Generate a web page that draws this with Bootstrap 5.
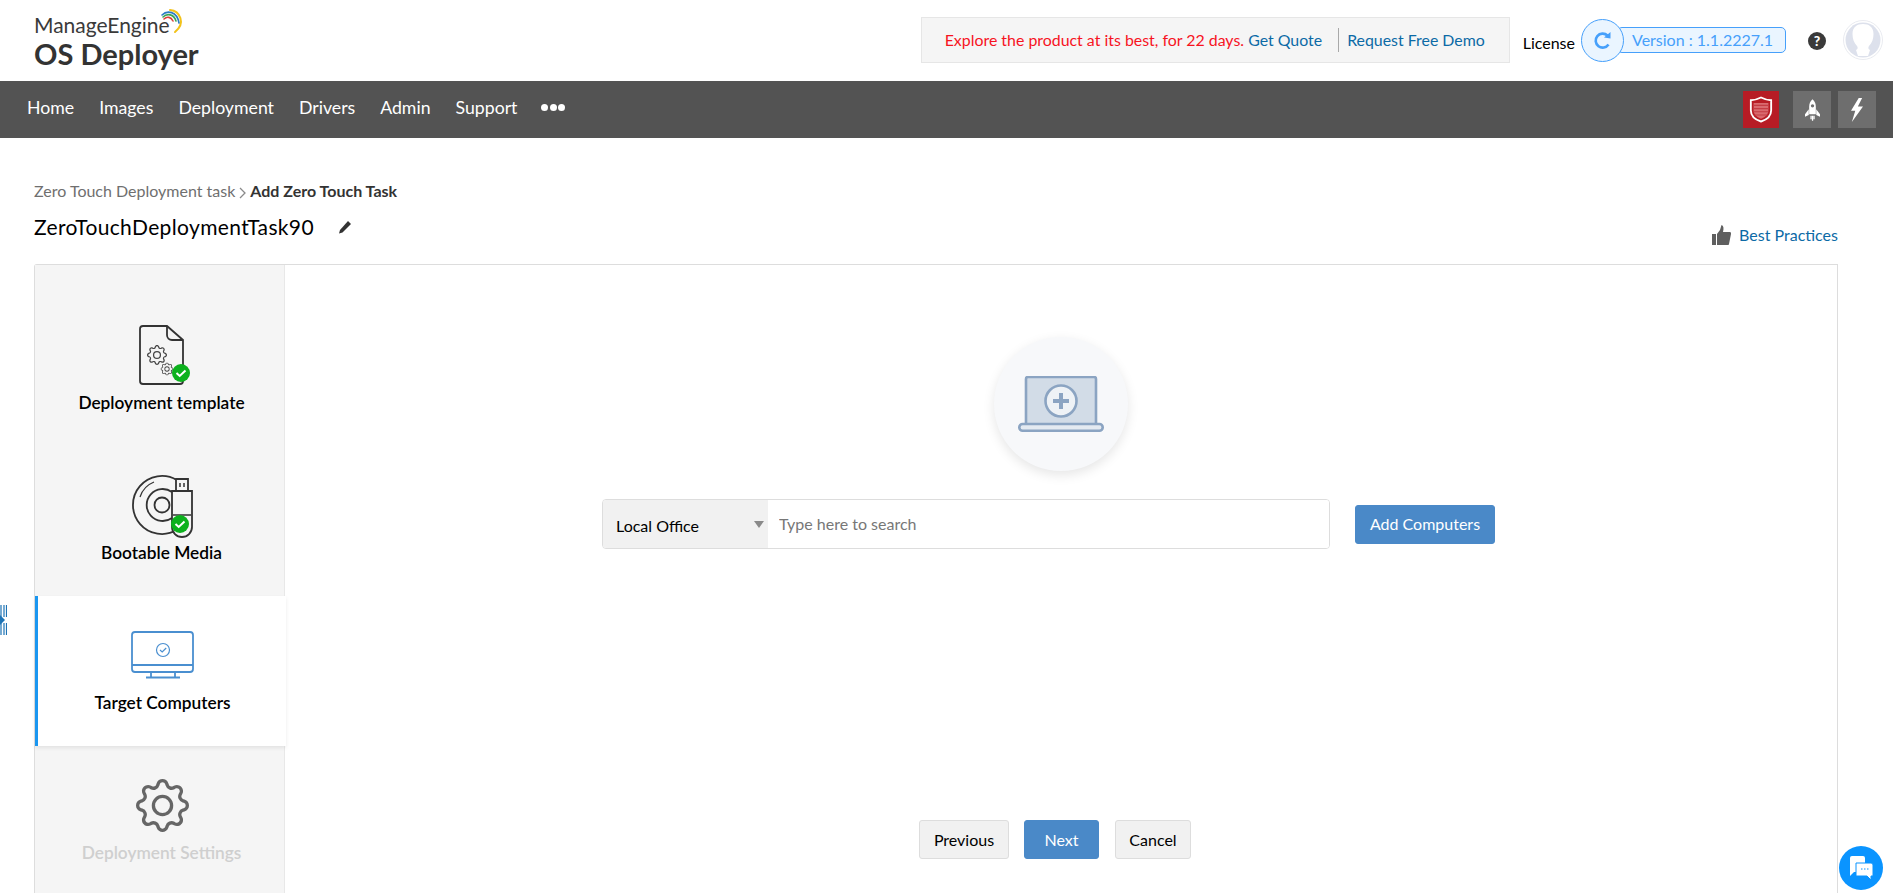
<!DOCTYPE html>
<html lang="en">
<head>
<meta charset="utf-8">
<title>OS Deployer</title>
<link href="https://cdn.jsdelivr.net/npm/bootstrap@5.3.0/dist/css/bootstrap.min.css" rel="stylesheet">
<style>
html,body{height:893px;overflow:hidden}
body{font-family:Lato,"Liberation Sans",sans-serif;color:#000;background:#fff;font-size:16px}
a{text-decoration:none}
.top-head{height:81px;padding-left:34px;padding-right:10px}
.brand-box{position:relative;width:180px;color:#333}
.brand-a{font-size:21px;line-height:26px;margin-top:12px;color:#3a3a3a}
.brand-b{font-size:29px;line-height:31px;font-weight:700;color:#333;margin-top:0}
.brand-arc{position:absolute;left:121px;top:8px}
.promo{width:589px;height:46px;background:#f5f5f5;border:1px solid #e6e6e6;margin-top:17px;padding-left:23px;font-size:15.9px}
.promo-red{color:#f7131f}
.promo a,.best-link{color:#0c6aa6}
.promo-sep{width:1px;height:24px;background:#a9a9a9;margin:0 8px 0 16px}
.lic{font-size:16px;margin-left:13px;margin-right:6px;margin-top:7px;color:#000}
.ver-wrap{position:relative;width:205px;height:43px;margin-top:19px}
.ver-pill{position:absolute;left:36px;right:0;top:8px;height:26px;background:#eaf5ff;border:1px solid #46a0fb;border-radius:5px;color:#46a0fb;font-size:16px;line-height:24px;padding-left:14px}
.ver-round{position:absolute;left:0;top:0;width:43px;height:43px;border-radius:50%;background:#eaf5ff;border:1px solid #46a0fb}
.help-dot{width:18px;height:18px;border-radius:50%;background:#3a3a3a;color:#fff;font-size:14px;line-height:18px;font-weight:900;text-align:center;margin:32px 17px 0 22px}
.avatar-box{margin-top:20px}
.nav-strip{height:57px;background:#535353;padding:0 17px 0 27px}
.nav-strip .nav-link{color:#fff;font-size:17.7px;padding:0 0 2px;margin-right:25px}
.dots-row{gap:1.500px;margin-top:-4px;margin-left:-1px}
.dots-row i{display:block;width:7px;height:7px;border-radius:50%;background:#fff}
.tool-tile{width:38px;height:37px;background:#6e6e6e;margin-left:7px}
.tool-red{width:36px;background:#b71c25;margin-right:7px}
.page-body{padding:0 55px 0 34px}
.crumbs{font-size:16px;line-height:20px;padding-top:43px;color:#6f6f6f;height:63px}
.crumbs b{color:#333;font-weight:700}
.title-row{height:63px;padding-top:12px}
.task-name{font-size:21px;line-height:28px;letter-spacing:.36px}
.best-link{font-size:16px;margin-top:10px}
.panel-box{height:640px;border:1px solid #ddd;border-bottom:0;border-radius:3px 0 0 0;background:#fff}
.side-col{width:250px;flex:none;padding-top:31px;background:#f5f5f5;border-right:1px solid #e8e8e8}
.step-item{height:150px;padding:29px 0 0 4px;text-align:center;font-size:17.3px;line-height:24px;font-weight:600}
.step-item svg{display:block;margin:0 auto 2px}
.step-on{background:#fff;border-left:3px solid #1a96f0;padding-left:1px;box-shadow:0 2px 4px rgba(0,0,0,.08);width:251px}
.step-off{color:#cfcfcf}
.main-col{height:627px;padding-top:72px}
.add-disc{width:134px;height:134px;border-radius:50%;background:#f7f8fa;box-shadow:0 4px 12px rgba(0,0,0,.1);margin-left:709px}
.search-line{margin:28px 0 0 317px;gap:25px}
.search-group{width:728px;height:50px;border:1px solid #ddd;border-radius:4px}
.scope-btn{width:166px;height:48px;background:#f1f1f1;border:0;border-right:1px solid #ddd;border-radius:3px 0 0 3px;text-align:left;padding-left:13px;font-size:16px;padding-top:5px;position:relative;color:#000}
.scope-btn::after{position:absolute;right:4px;top:21px;border-top:7px solid #8a8a8a;border-left:5px solid transparent;border-right:5px solid transparent;border-bottom:0;margin:0}
.search-field{border:0;font-size:16px;padding-left:11px;border-radius:0 3px 3px 0}
.search-field::placeholder{color:#777}
.blue-btn{background:#4a89c8;border:1px solid #4a89c8;color:#fff;font-size:16px;height:39px;padding:0;border-radius:3px}
.blue-btn:hover{background:#4a89c8;color:#fff}
.add-btn{width:140px}
.foot-row{margin-top:auto;margin-bottom:33px;padding-left:634px;gap:15px}
.ghost-btn{background:#f1f1f1;border:1px solid #ddd;color:#000;font-size:16px;height:39px;padding:0;border-radius:3px}
.w-prev{width:90px}.w-next{width:75px}.w-cancel{width:76px;margin-left:1px}
.edge-mark{position:fixed;left:0;top:605px}
.chat-bubble{position:fixed;left:1839px;top:846px;width:44px;height:44px;border-radius:50%;background:#0a94ff}
</style>
</head>
<body>
<svg width="0" height="0" class="d-block position-absolute">
<defs>
<symbol id="gear-shape" viewBox="0 0 16 16">
<path d="M8 4.754a3.246 3.246 0 1 0 0 6.492 3.246 3.246 0 0 0 0-6.492zM5.754 8a2.246 2.246 0 1 1 4.492 0 2.246 2.246 0 0 1-4.492 0z"/>
<path d="M9.796 1.343c-.527-1.79-3.065-1.79-3.592 0l-.094.319a.873.873 0 0 1-1.255.52l-.292-.16c-1.64-.892-3.433.902-2.54 2.541l.159.292a.873.873 0 0 1-.52 1.255l-.319.094c-1.79.527-1.79 3.065 0 3.592l.319.094a.873.873 0 0 1 .52 1.255l-.16.292c-.892 1.64.901 3.434 2.541 2.54l.292-.159a.873.873 0 0 1 1.255.52l.094.319c.527 1.79 3.065 1.79 3.592 0l.094-.319a.873.873 0 0 1 1.255-.52l.292.16c1.64.893 3.434-.902 2.54-2.541l-.159-.292a.873.873 0 0 1 .52-1.255l.319-.094c1.79-.527 1.79-3.065 0-3.592l-.319-.094a.873.873 0 0 1-.52-1.255l.16-.292c.893-1.64-.902-3.433-2.541-2.54l-.292.159a.873.873 0 0 1-1.255-.52l-.094-.319zm-2.633.283c.246-.835 1.428-.835 1.674 0l.094.319a1.873 1.873 0 0 0 2.693 1.115l.291-.16c.764-.415 1.6.42 1.184 1.185l-.159.292a1.873 1.873 0 0 0 1.116 2.692l.318.094c.835.246.835 1.428 0 1.674l-.319.094a1.873 1.873 0 0 0-1.115 2.693l.16.291c.415.764-.42 1.6-1.185 1.184l-.291-.159a1.873 1.873 0 0 0-2.693 1.116l-.094.318c-.246.835-1.428.835-1.674 0l-.094-.319a1.873 1.873 0 0 0-2.692-1.115l-.292.16c-.764.415-1.6-.42-1.184-1.185l.159-.291A1.873 1.873 0 0 0 1.945 8.93l-.319-.094c-.835-.246-.835-1.428 0-1.674l.319-.094A1.873 1.873 0 0 0 3.06 4.377l-.16-.292c-.415-.764.42-1.6 1.185-1.184l.292.159a1.873 1.873 0 0 0 2.692-1.115l.094-.319z"/>
</symbol>
</defs>
</svg>

<header class="top-head d-flex align-items-start">
  <div class="brand-box">
    <div class="brand-a">ManageEngine</div>
    <div class="brand-b">OS Deployer</div>
    <svg class="brand-arc" width="32" height="28" viewBox="0 0 32 28" fill="none" stroke-width="1.6" stroke-linecap="round">
      <path d="M15 2C25 3 31 15 20 24" stroke="#f2c21a" stroke-width="2"/>
      <path d="M7 7C12 2 22 3 24 15" stroke="#2a7bc4"/>
      <path d="M8 9C12 5 19 6 21 13" stroke="#3aa655"/>
      <path d="M9 11C12 8 16 9 18 13" stroke="#d9413c"/>
    </svg>
  </div>
  <div class="ms-auto d-flex align-items-start">
    <div class="promo d-flex align-items-center">
      <span class="promo-red">Explore the product at its best, for 22 days.</span>&nbsp;<a href="#">Get Quote</a>
      <span class="promo-sep"></span>
      <a href="#">Request Free Demo</a>
    </div>
    <div class="lic pt-4">License</div>
    <div class="ver-wrap">
      <div class="ver-pill">Version : 1.1.2227.1</div>
      <div class="ver-round d-flex align-items-center justify-content-center">
        <svg width="20" height="20" viewBox="0 0 20 20" fill="none"><path d="M15.500 13.500A7 7 0 1 1 14.500 4.500" stroke="#46a0fb" stroke-width="2.600"/><path d="M11 6.500L17.500 7.500V1Z" fill="#46a0fb"/></svg>
      </div>
    </div>
    <div class="help-dot">?</div>
    <svg class="avatar-box" width="40" height="40" viewBox="0 0 40 40"><circle cx="20" cy="20" r="19.500" fill="#fff" stroke="#e9ebf0"/><circle cx="20" cy="20" r="17.500" fill="#dde1ec"/><path d="M9.500 14c0-7 4.500-10 10.500-10s10.500 3 10.500 10c0 5-1.500 9-4.500 12-1 1.500-1 3 1 4l-2 6H15l-2-6c2-1 2-2.500 1-4-3-3-4.500-7-4.500-12z" fill="#fff"/></svg>
  </div>
</header>

<nav class="nav-strip d-flex align-items-center">
  <ul class="nav align-items-center">
    <li class="nav-item"><a class="nav-link" href="#">Home</a></li>
    <li class="nav-item"><a class="nav-link" href="#">Images</a></li>
    <li class="nav-item"><a class="nav-link" href="#">Deployment</a></li>
    <li class="nav-item"><a class="nav-link" href="#">Drivers</a></li>
    <li class="nav-item"><a class="nav-link" href="#">Admin</a></li>
    <li class="nav-item"><a class="nav-link" href="#">Support</a></li>
    <li class="nav-item d-flex dots-row"><i></i><i></i><i></i></li>
  </ul>
  <div class="ms-auto d-flex">
    <div class="tool-tile tool-red d-flex align-items-center justify-content-center">
      <svg width="24" height="29" viewBox="0 0 26 30"><path d="M13 2C9 4 6 5 2 5v11c0 6 5 10 11 12 6-2 11-6 11-12V5c-4 0-7-1-11-3z" fill="none" stroke="#fff" stroke-width="2"/><path d="M5 8h16v8c0 4-3 7-8 9-5-2-8-5-8-9z" fill="#d96a6f"/><path d="M5 10.500h16M5 14h16M5 17.500h16M6 21h14" stroke="#c43c44" stroke-width="1.200"/></svg>
    </div>
    <div class="tool-tile d-flex align-items-center justify-content-center">
      <svg width="15" height="26" viewBox="0 0 18 28" fill="#fff"><path d="M9 1c3 2.500 4 6 4 9v9H5v-9c0-3 1-6.500 4-9z"/><path d="M4.500 13L0 19v3l4.500-2zM13.500 13L18 19v3l-4.500-2z"/><path d="M6.500 21h1.500v4H6.500zM8.300 21h1.500v6H8.300zM10.100 21h1.500v4h-1.500z"/><circle cx="9" cy="9" r="2" fill="#6e6e6e"/></svg>
    </div>
    <div class="tool-tile d-flex align-items-center justify-content-center">
      <svg width="14" height="24" viewBox="0 0 16 28" fill="#fff"><path d="M10 0L1 15h5L2 28 15 10H9l5-10z"/></svg>
    </div>
  </div>
</nav>

<div class="page-body">
  <div class="crumbs">Zero Touch Deployment task<svg class="mx-1" width="7" height="12" viewBox="0 0 7 12" fill="none"><path d="M1 1l5 5-5 5" stroke="#8a8a8a" stroke-width="1.300"/></svg><b>Add Zero Touch Task</b></div>
  <div class="title-row d-flex justify-content-between align-items-start">
    <div class="d-flex align-items-center task-name">ZeroTouchDeploymentTask90
      <svg class="ms-4" width="14" height="14" viewBox="0 0 14 14" fill="#333"><path d="M10 1l3 3-8.500 8.500L1 13.500 2 10z"/></svg>
    </div>
    <a class="best-link d-flex align-items-center gap-2" href="#">
      <svg width="19" height="20" viewBox="0 0 19 20" fill="#5f5f5f"><path d="M0 9h4v11H0zM5 9l3-4 1.500-5c2 .5 2.500 3 1.500 7h7c1 0 1 1 1 2l-2 10c0 1-1 1-2 1H5z"/></svg>
      Best Practices
    </a>
  </div>
  <div class="panel-box d-flex">
    <aside class="side-col">
      <div class="step-item">
        <svg width="70" height="64" viewBox="0 0 70 64" fill="none">
          <path d="M16 1h24l16 14v41a3 3 0 0 1-3 3H16a3 3 0 0 1-3-3V4a3 3 0 0 1 3-3z" stroke="#333" stroke-width="1.800"/>
          <path d="M40 1v9a5 5 0 0 0 5 5h11" stroke="#333" stroke-width="1.800"/>
          <use href="#gear-shape" x="20" y="20" width="20" height="20" fill="#444"/>
          <use href="#gear-shape" x="33.500" y="37.500" width="13" height="13" fill="#444"/>
          <circle cx="54" cy="48" r="9" fill="#0cb11d"/>
          <path d="M49.500 48l3.200 3 5.800-5.500" stroke="#fff" stroke-width="2"/>
        </svg>
        Deployment template
      </div>
      <div class="step-item">
        <svg width="70" height="64" viewBox="0 0 70 64" fill="none" stroke="#333" stroke-width="1.800">
          <path d="M50 5.200A29 29 0 1 0 50 54.800"/>
          <path d="M45 17A16 16 0 1 0 45 43"/>
          <circle cx="35" cy="30" r="7.500"/>
          <path d="M27 7A24 24 0 0 0 13 22" stroke-width="1.200"/>
          <path d="M49 4h12v12H49zM45 16h20v36a10 10 0 0 1-20 0z" fill="#f5f5f5"/>
          <path d="M53 8v4M57 8v4M46 40h18" stroke-width="1.500"/>
          <circle cx="53" cy="49" r="9" fill="#0cb11d" stroke="none"/>
          <path d="M48.500 49l3.200 3 5.800-5.500" stroke="#fff" stroke-width="2"/>
        </svg>
        Bootable Media
      </div>
      <div class="step-item step-on">
        <svg width="70" height="64" viewBox="0 0 70 64" fill="none" stroke="#4a8fd0" stroke-width="1.800">
          <rect x="4" y="7" width="61" height="40" rx="3"/>
          <path d="M4 40h61M23 47v5M47 47v5M18 52.500h34"/>
          <circle cx="35" cy="25" r="6.500" stroke-width="1.200"/>
          <path d="M32 25l2.200 2 4-4" stroke-width="1.200"/>
        </svg>
        Target Computers
      </div>
      <div class="step-item step-off">
        <svg width="70" height="64" viewBox="0 0 70 64" fill="#666"><use href="#gear-shape" x="9" y="4" width="53" height="53"/></svg>
        Deployment Settings
      </div>
    </aside>
    <main class="main-col flex-grow-1 d-flex flex-column">
      <div class="add-disc d-flex align-items-center justify-content-center">
        <svg width="86" height="56" viewBox="0 0 86 56">
          <path d="M8 3a2 2 0 0 1 2-2h66a2 2 0 0 1 2 2v46H8z" fill="#d2dce7" stroke="#8ba4c2" stroke-width="2.600"/>
          <rect x="1.300" y="48" width="83.400" height="6.700" rx="3.300" fill="#e4eaf1" stroke="#8ba4c2" stroke-width="2.600"/>
          <circle cx="43" cy="25" r="15.500" fill="#eef2f6" stroke="#8ba4c2" stroke-width="2.600"/>
          <path d="M43 17v16M35 25h16" stroke="#8ba4c2" stroke-width="4"/>
        </svg>
      </div>
      <div class="search-line d-flex align-items-center">
        <div class="input-group search-group flex-nowrap">
          <button class="scope-btn dropdown-toggle" type="button">Local Office</button>
          <input class="form-control search-field" type="text" placeholder="Type here to search">
        </div>
        <button class="btn blue-btn add-btn" type="button">Add Computers</button>
      </div>
      <div class="foot-row d-flex">
        <button class="btn ghost-btn w-prev" type="button">Previous</button>
        <button class="btn blue-btn w-next" type="button">Next</button>
        <button class="btn ghost-btn w-cancel" type="button">Cancel</button>
      </div>
    </main>
  </div>
</div>

<svg class="edge-mark" width="7" height="30" viewBox="0 0 7 30" fill="none" stroke="#1f74b5" stroke-width="1.200"><path d="M1 0v12M4 0v12M6.500 0v12M1 18v12M4 18v12M6.500 18v12"/><path d="M0 10l5 5-5 5z" fill="#1f74b5" stroke="none"/></svg>
<div class="chat-bubble d-flex align-items-center justify-content-center">
  <svg width="28" height="28" viewBox="0 0 28 28"><path d="M3 4a2 2 0 0 1 2-2h11a2 2 0 0 1 2 2v14H7l-4 4z" fill="#fff"/><path d="M9 9h15a2 2 0 0 1 2 2v11h-2v4l-4-4H9z" fill="#fff" stroke="#0a94ff"/><path d="M14 15h1.500M17 15h1.500M20 15h1.500" stroke="#0a94ff"/></svg>
</div>
<script src="https://cdn.jsdelivr.net/npm/bootstrap@5.3.0/dist/js/bootstrap.bundle.min.js"></script>
</body>
</html>
